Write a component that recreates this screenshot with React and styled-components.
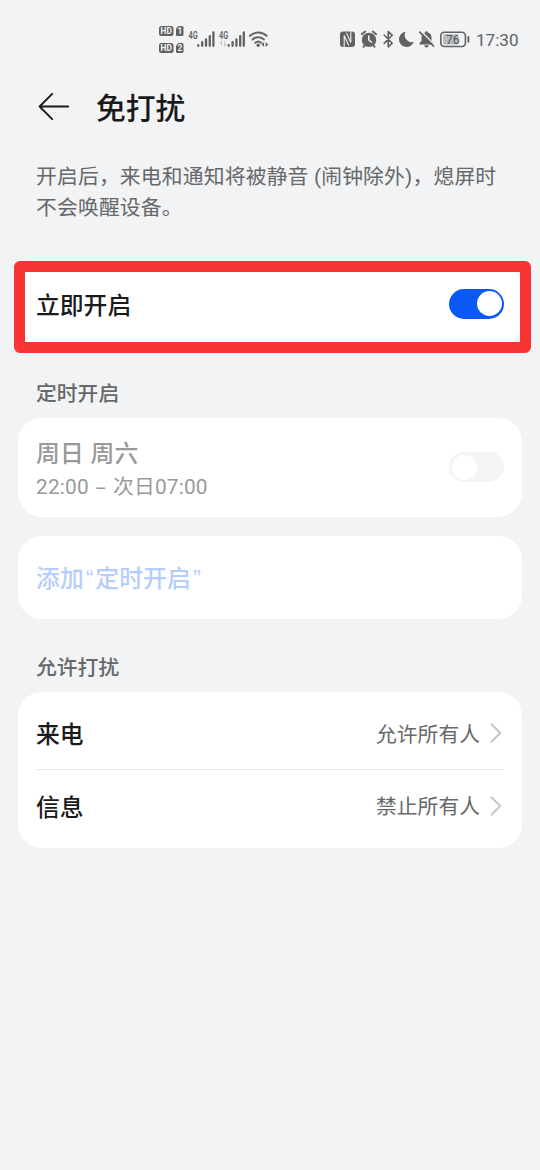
import React from "react";
import styled, { createGlobalStyle } from "styled-components";

const GlobalStyle = createGlobalStyle`
    * {
        box-sizing: border-box;
    }
    body {
        margin: 0;
        background: #f1f3f5;
        font-family: Roboto, "Noto Sans CJK SC", sans-serif;
        color: #1a1a1a;
    }
`
const Screen = styled.div`
    width: 540px;
    height: 1170px;
    overflow: hidden;
    background: #f1f3f5;
`
const StatusBar = styled.div`
    display: flex;
    justify-content: space-between;
    height: 78px;
    padding: 20px 22px 0 156px;
`
const StatusGroup = styled.div`
    display: flex;
    align-items: center;
    height: 40px;
`
const Clock = styled.span`
    margin-left: 6px;
    width: 42px;
    font-size: 17.1px;
    line-height: 40px;
    color: #606264;
    white-space: nowrap;
`
const Header = styled.header`
    display: flex;
    align-items: center;
    height: 58px;
    padding-left: 36px;
`
const Title = styled.h1`
    margin: 0 0 0 24px;
    padding-top: 4px;
    font-size: 29.8px;
    font-weight: 500;
    line-height: 58px;
`
const Description = styled.p`
    margin: 26px 36px 0;
    height: 103px;
    font-size: 20.8px;
    line-height: 31px;
    letter-spacing: 0.17px;
    color: #66686a;
    white-space: nowrap;
`
const Card = styled.section`
    position: relative;
    height: ${(props) => props.$height}px;
    margin: 0 18px ${(props) => props.$gap || 0}px;
    padding: 0 18px;
    border-radius: 24px;
    background: #fff;
`
const Highlight = styled.div`
    position: absolute;
    top: -4px;
    left: -4px;
    width: 517px;
    height: 91.5px;
    border: 11px solid #f83434;
    border-radius: 6px;
    pointer-events: none;
`
const Row = styled.div`
    display: flex;
    align-items: center;
    justify-content: space-between;
    height: ${(props) => props.$height}px;
    padding-top: ${(props) => props.$top || 0}px;
    border-bottom: ${(props) => (props.$divider ? "1px solid #e2e2e2" : "none")};
`
const RowTitle = styled.div`
    padding-top: 4px;
    font-size: 23.8px;
    font-weight: 500;
    line-height: 34px;
    letter-spacing: ${(props) => props.$spacing || 0}px;
    color: ${(props) => props.$color || "#1a1a1a"};
`
const Quote = styled.span`
    font-family: "Liberation Sans", sans-serif;
    font-weight: 400;
    margin: 0 1.5px 0 2px;
`
const RowNote = styled.div`
    font-size: 20.8px;
    line-height: 30px;
    letter-spacing: 0.2px;
    color: #999;
`
const Dash = styled.span`
    margin: 0 1.4px;
    font-family: "Noto Sans", sans-serif;
`
const RowValue = styled.div`
    display: flex;
    align-items: center;
    gap: 10px;
    font-size: 20.8px;
    color: #66686a;
`
const ValueText = styled.span`
    padding-top: 3px;
    line-height: 30px;
`
const SectionLabel = styled.h2`
    margin: 0 36px;
    padding-top: 1px;
    height: ${(props) => props.$height}px;
    font-size: 20.8px;
    font-weight: 500;
    line-height: 30px;
    color: #66686a;
`
const Switch = styled.div`
    display: flex;
    justify-content: ${(props) => (props.$on ? "flex-end" : "flex-start")};
    width: 55px;
    height: 30px;
    padding: 2.5px;
    border-radius: 15px;
    background: ${(props) => (props.$on ? "#0a59f7" : "#f4f4f4")};
`
const Knob = styled.span`
    width: 25px;
    height: 25px;
    border-radius: 50%;
    background: #fff;
`

const ink = "#606264";

// HD badges of both SIM cards, signal bars and wifi
function NetworkIcons() {
    return (
        <svg width="116" height="40" viewBox="156 20 116 40" fontFamily="Roboto, sans-serif">
            {[1, 2].map((sim, i) => (
                <g key={sim} transform={`translate(0 ${i * 17})`}>
                    <rect x="159" y="26" width="14.5" height="10" rx="2.5" fill={ink} />
                    <text x="166.2" y="34" fontSize="8.3" fontWeight="700" textAnchor="middle" fill="#f1f3f5">HD</text>
                    <path d="M178.5 26H182a1.5 1.5 0 0 1 1.5 1.5v7A1.5 1.5 0 0 1 182 36h-4.5a1.5 1.5 0 0 1-1.5-1.5v-6z" fill={ink} />
                    <text x="179.8" y="34" fontSize="8.3" fontWeight="700" textAnchor="middle" fill="#f1f3f5">{sim}</text>
                </g>
            ))}
            {[188.6, 219].map((x) => (
                <g key={x}>
                    <text x={x} y="38.5" fontSize="10" fontWeight="600" textLength="9.2" lengthAdjust="spacingAndGlyphs" fill={ink}>4G</text>
                    <path
                        d="M0 45.8v-.6M4 45.8v-3.6M7.8 45.8v-6.4M11.6 45.8v-9.6M15.2 45.8V32.3"
                        transform={`translate(${x + 9.6} 0)`}
                        stroke={ink}
                        strokeWidth="2.3"
                        strokeLinecap="round"
                    />
                </g>
            ))}
            <path d="M221.5 46v-4.5l-1.7 1.8M224.5 41.5V46l1.7-1.8" fill="none" stroke="#c8cacc" strokeWidth="1.1" />
            <g fill="none" stroke={ink} strokeWidth="2" strokeLinecap="round">
                <path d="M250 35.8a12 12 0 0 1 16.6 0" />
                <path d="M252.7 39.5a8 8 0 0 1 11.2 0" />
                <path d="M255.4 42.8a4.3 4.3 0 0 1 5.8 0" />
            </g>
            <circle cx="258.2" cy="45.3" r="1.7" fill={ink} />
            <path d="M264.1 42v5l-2.6-2.5zM265.7 42v5l2.6-2.5z" fill={ink} />
        </svg>
    )
}

// nfc, alarm, bluetooth, do-not-disturb moon, muted bell and battery
function DeviceIcons() {
    return (
        <svg width="132" height="40" viewBox="338 20 132 40" fontFamily="Roboto, sans-serif">
            <rect x="340" y="31.5" width="15" height="15.5" rx="3" fill={ink} />
            <path d="M344.2 47.2V35.4l4.6 10.2M346.4 32.6l4.4 10V31.2" fill="none" stroke="#f1f3f5" strokeWidth="1.1" />
            <circle cx="369" cy="39.9" r="7.2" fill={ink} />
            <path d="M361.8 34.3l3.4-2.8M376.2 34.3l-3.4-2.8M364.6 45.5l-1.3 1.3M373.4 45.5l1.3 1.3" stroke={ink} strokeWidth="1.8" strokeLinecap="round" />
            <path d="M368.8 36v4l2.7 2.1" fill="none" stroke="#f1f3f5" strokeWidth="1.5" strokeLinecap="round" />
            <path d="M384.2 35l8 8.2-4 3.6V31.6l4 3.6-8 8.2" fill="none" stroke={ink} strokeWidth="1.6" strokeLinejoin="round" strokeLinecap="round" />
            <path d="M405.6 31.8a7.6 7.6 0 1 0 8.2 10 7 7 0 0 1-8.2-10z" fill={ink} />
            <path d="M426.5 31.2a1.3 1.3 0 0 1 1.3 1.3 5 5 0 0 1 3.7 4.9v3.4l2 2.4v1.3h-14v-1.3l2-2.4v-3.4a5 5 0 0 1 3.7-4.9 1.3 1.3 0 0 1 1.3-1.3zM424.3 45.3h4.4a2.2 2.2 0 0 1-4.4 0z" fill={ink} />
            <path d="M421.3 31.3l13 13.4" stroke="#f1f3f5" strokeWidth="1.4" />
            <path d="M419.8 32.1l13.7 14" stroke={ink} strokeWidth="1.7" strokeLinecap="round" />
            <rect x="440.8" y="32.2" width="24.6" height="14.3" rx="3.5" fill="none" stroke={ink} strokeWidth="1.6" />
            <rect x="443" y="34.3" width="15.5" height="10.1" rx="1.5" fill="#b9bbbd" />
            <text x="452.8" y="43.7" fontSize="12" textAnchor="middle" fill="#505254">76</text>
            <path d="M468.4 37v4.8" stroke={ink} strokeWidth="1.9" strokeLinecap="round" />
        </svg>
    )
}

function BackArrow() {
    return (
        <svg width="36" height="32" viewBox="0 0 36 32" fill="none" stroke="#1a1a1a" strokeWidth="1.9" strokeLinecap="round" strokeLinejoin="round">
            <path d="M32.2 15.5H3.6M16.2 2.8L3.6 15.5l12.6 12.7" />
        </svg>
    )
}

function Chevron() {
    return (
        <svg width="14" height="22" viewBox="0 0 14 22" fill="none" stroke="#c6c6c6" strokeWidth="2" strokeLinecap="round" strokeLinejoin="round">
            <path d="M1.5 2.3l8.7 8.7-8.7 8.7" />
        </svg>
    )
}

function Toggle({ on }) {
    return (
        <Switch $on={on} role="switch" aria-checked={on}>
            <Knob />
        </Switch>
    )
}

const allowed = [
    { name: "来电", value: "允许所有人", height: 78, top: 6 },
    { name: "信息", value: "禁止所有人", height: 72, top: 0 },
];

function App() {
    return (
        <Screen>
            <GlobalStyle />
            <StatusBar>
                <StatusGroup>
                    <NetworkIcons />
                </StatusGroup>
                <StatusGroup>
                    <DeviceIcons />
                    <Clock>17:30</Clock>
                </StatusGroup>
            </StatusBar>
            <Header>
                <BackArrow />
                <Title>免打扰</Title>
            </Header>
            <Description>
                开启后，来电和通知将被静音 (闹钟除外)，熄屏时
                <br />
                不会唤醒设备。
            </Description>
            <Card $height={82} $gap={31}>
                <Row $height={77}>
                    <RowTitle>立即开启</RowTitle>
                    <Toggle on={true} />
                </Row>
                <Highlight />
            </Card>
            <SectionLabel $height={39.5}>定时开启</SectionLabel>
            <Card $height={99.5} $gap={18.5}>
                <Row $height={99.5}>
                    <div>
                        <RowTitle $color="#999" $spacing={0.3}>周日 周六</RowTitle>
                        <RowNote>22:00 <Dash>–</Dash> 次日07:00</RowNote>
                    </div>
                    <Toggle on={false} />
                </Row>
            </Card>
            <Card $height={83.5} $gap={32.5}>
                <Row $height={83.5}>
                    <RowTitle $color="#b5cdfc" $spacing={0.1}>
                        添加<Quote>“</Quote>定时开启<Quote>”</Quote>
                    </RowTitle>
                </Row>
            </Card>
            <SectionLabel $height={40}>允许打扰</SectionLabel>
            <Card $height={156}>
                {allowed.map((item) => (
                    <Row key={item.name} $height={item.height} $top={item.top} $divider={item.top > 0}>
                        <RowTitle>{item.name}</RowTitle>
                        <RowValue>
                            <ValueText>{item.value}</ValueText>
                            <Chevron />
                        </RowValue>
                    </Row>
                ))}
            </Card>
        </Screen>
    )
}

export default App;
